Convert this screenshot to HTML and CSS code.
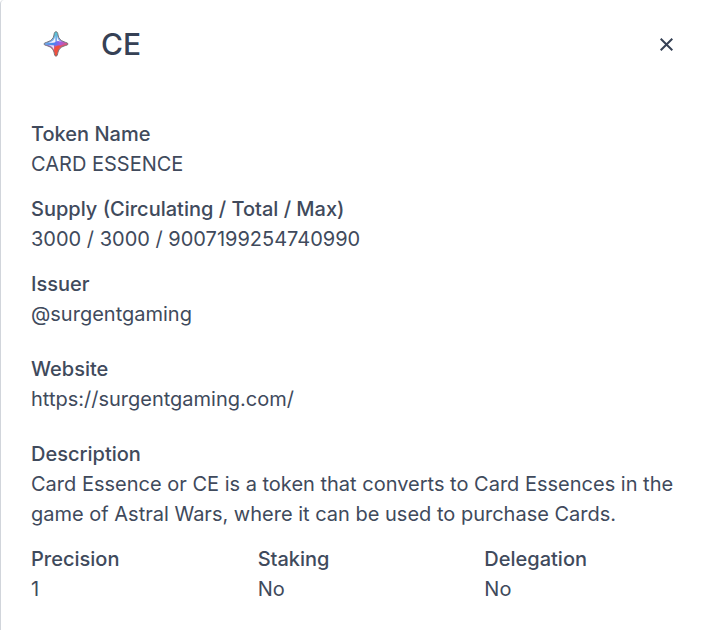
FILE: index.html
```html
<!DOCTYPE html>
<html lang="en">
<head>
<meta charset="utf-8">
<title>CE</title>
<link rel="stylesheet" href="styles.css">
</head>
<body>
<main class="panel">
  <header class="header">
    <svg class="logo" viewBox="0 0 50 50" aria-hidden="true">
      <defs>
        <linearGradient id="body" x1=".3" y1="0" x2=".6" y2="1">
          <stop offset="0" stop-color="#45d0c8"/>
          <stop offset=".38" stop-color="#7fa8f2"/>
          <stop offset=".52" stop-color="#9a62e0"/>
          <stop offset=".68" stop-color="#f0505a"/>
          <stop offset="1" stop-color="#f5482a"/>
        </linearGradient>
        <linearGradient id="side" x1="0" y1="0" x2="1" y2="0">
          <stop offset="0" stop-color="#2fc0cc"/>
          <stop offset=".45" stop-color="#4f7cf5"/>
          <stop offset=".7" stop-color="#a55ce0"/>
          <stop offset="1" stop-color="#e0507c"/>
        </linearGradient>
      </defs>
      <path fill="url(#body)" stroke="#77737a" stroke-width="1" d="M25 12.700C26.300 12.700 26.800 14 27 16C27.500 19.500 29.500 21.500 33 22.800C35.500 23.800 37 24 37 25C37 26 35.500 26.200 33 27C29.500 28.200 28 30 27 33C26.500 35.500 26.200 37.200 25 37.200C23.800 37.200 23.500 35.500 23 33C22 30 20.500 28.200 17 27C14.500 26.200 13 26 13 25C13 24 14.500 23.800 17 22.800C20.500 21.500 22.500 19.500 23 16C23.200 14 23.700 12.700 25 12.700Z"/>
      <path fill="#f0f4fc" d="M24.300 17V23.700H17.500Q23.500 22.500 24.300 17ZM26 17V22.300L31 23.200Q26.500 21.500 26 17Z"/>
      <path fill="#e4e6f8" d="M17.500 26.200H23V31Q22 27.500 17.500 26.200Z"/>
      <path fill="url(#side)" d="M13.500 25L23 23.800L27 22L36 24.500L28 26.500L23 26.300Z"/>
      <path fill="#f0503c" d="M24 28L27 26.500L29.500 26.700Q26.500 29.500 26 34L25 36.500L24 34Z"/>
    </svg>
    <h1 class="title">CE</h1>
    <button class="close" type="button" aria-label="Close">
      <svg class="cross" viewBox="0 0 13 13" aria-hidden="true"><path d="M.7 .7L12.300 12.300M12.300 .7L.7 12.300"/></svg>
    </button>
  </header>
  <dl class="details">
    <div class="field"><dt>Token Name</dt><dd>CARD ESSENCE</dd></div>
    <div class="field"><dt>Supply (Circulating / Total / Max)</dt><dd>3000 / 3000 / 9007199254740990</dd></div>
    <div class="field spaced"><dt>Issuer</dt><dd>@surgentgaming</dd></div>
    <div class="field spaced"><dt>Website</dt><dd><a href="https://surgentgaming.com/">https://surgentgaming.com/</a></dd></div>
    <div class="field"><dt>Description</dt><dd>Card Essence or CE is a token that converts to Card Essences in the game of Astral Wars, where it can be used to purchase Cards.</dd></div>
  </dl>
  <dl class="facts">
    <div><dt>Precision</dt><dd>1</dd></div>
    <div><dt>Staking</dt><dd>No</dd></div>
    <div><dt>Delegation</dt><dd>No</dd></div>
  </dl>
</main>
</body>
</html>
```
FILE: styles.css
```css
* { box-sizing: border-box; }

body {
  margin: 0;
  background: #fff;
  color: #404a5c;
  font: 400 20px/30px Inter, "Liberation Sans", sans-serif;
}

.panel {
  min-height: 100vh;
  padding: 19px 36px 26px 30px;
  border-left: 1px solid #d1d5db;
  border-top-left-radius: 4px;
}

.header {
  display: flex;
  align-items: center;
}

.logo { width: 50px; height: 50px; }

.title {
  flex: 1;
  margin: 0 0 0 20px;
  color: #364155;
  font-size: 30px;
  font-weight: 500;
  line-height: 40px;
}

.close {
  display: flex;
  padding: 8px;
  border: 0;
  background: none;
  color: #364155;
}

.cross {
  width: 13px;
  height: 13px;
  fill: none;
  stroke: currentColor;
  stroke-width: 2;
}

dl, dd { margin: 0; }
dt { font-weight: 500; }
a { color: inherit; text-decoration: none; }

.details { padding-top: 50px; }
.field { margin-bottom: 15px; }
.spaced { margin-bottom: 25px; }

.facts {
  display: grid;
  grid-template-columns: repeat(3, 1fr);
  column-gap: 30px;
}
```
